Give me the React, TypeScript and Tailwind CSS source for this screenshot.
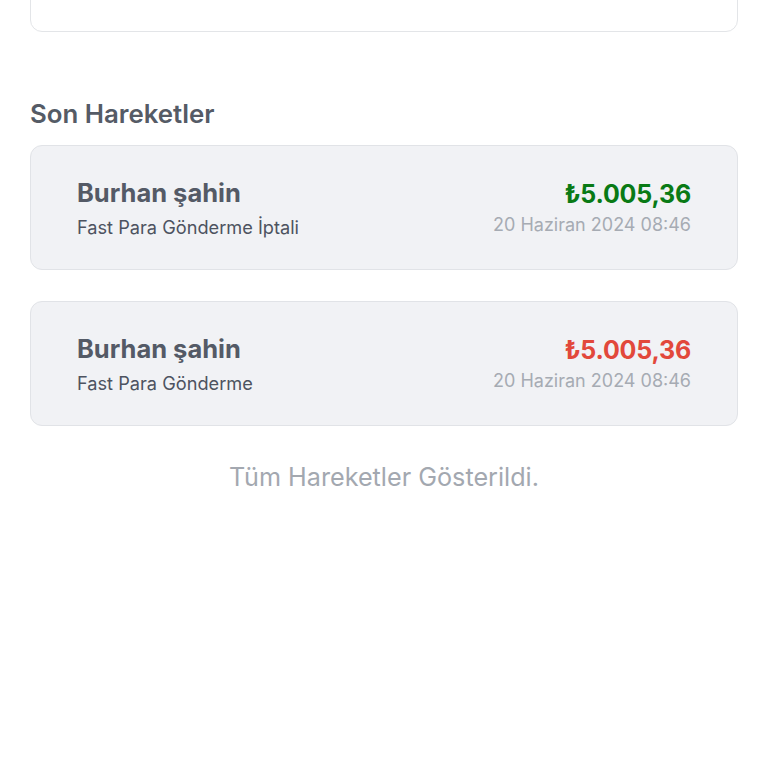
const font = { fontFamily: "Inter, 'Noto Sans', sans-serif" }

type Movement = {
  name: string
  desc: string
  amount: string
  date: string
  positive: boolean
}

const movements: Movement[] = [
  {
    name: "Burhan şahin",
    desc: "Fast Para Gönderme İptali",
    amount: "₺5.005,36",
    date: "20 Haziran 2024 08:46",
    positive: true,
  },
  {
    name: "Burhan şahin",
    desc: "Fast Para Gönderme",
    amount: "₺5.005,36",
    date: "20 Haziran 2024 08:46",
    positive: false,
  },
]

function MovementCard({ m }: { m: Movement }) {
  return (
    <div className="flex items-center justify-between h-[125px] px-[46px] rounded-xl border border-[#e1e3e7] bg-[#f1f2f5]">
      <div className="flex flex-col">
        <span className="text-[25.5px] leading-8 font-bold text-[#545a66]">{m.name}</span>
        <span className="text-[18.2px] leading-6 mt-[6px] text-[#4d5360]">{m.desc}</span>
      </div>
      <div className="flex flex-col items-end">
        <span
          className={
            m.positive
              ? "text-[25px] leading-8 font-bold text-[#097a15] tracking-[-0.2px]"
              : "text-[25px] leading-8 font-bold text-[#e2483b] tracking-[-0.2px]"
          }
        >
          {m.amount}
        </span>
        <span className="text-[18px] leading-6 mt-[3px] text-[#a6abb3]">{m.date}</span>
      </div>
    </div>
  )
}

export default function App() {
  return (
    <div className="min-h-[768px] w-full bg-white overflow-hidden" style={font}>
      <div className="px-[30px]">
        <div className="-mt-[90px] h-[122px] rounded-xl border border-[#e3e5e8] bg-white" />
        <h2 className="mt-[66px] text-[25.8px] leading-8 font-semibold text-[#555b66]">Son Hareketler</h2>
        <div className="mt-[15px] flex flex-col gap-[31px]">
          {movements.map((m, i) => (
            <MovementCard key={i} m={m} />
          ))}
        </div>
        <p className="mt-[35px] text-center text-[25.2px] leading-8 text-[#a3a8b0]">Tüm Hareketler Gösterildi.</p>
      </div>
    </div>
  )
}
